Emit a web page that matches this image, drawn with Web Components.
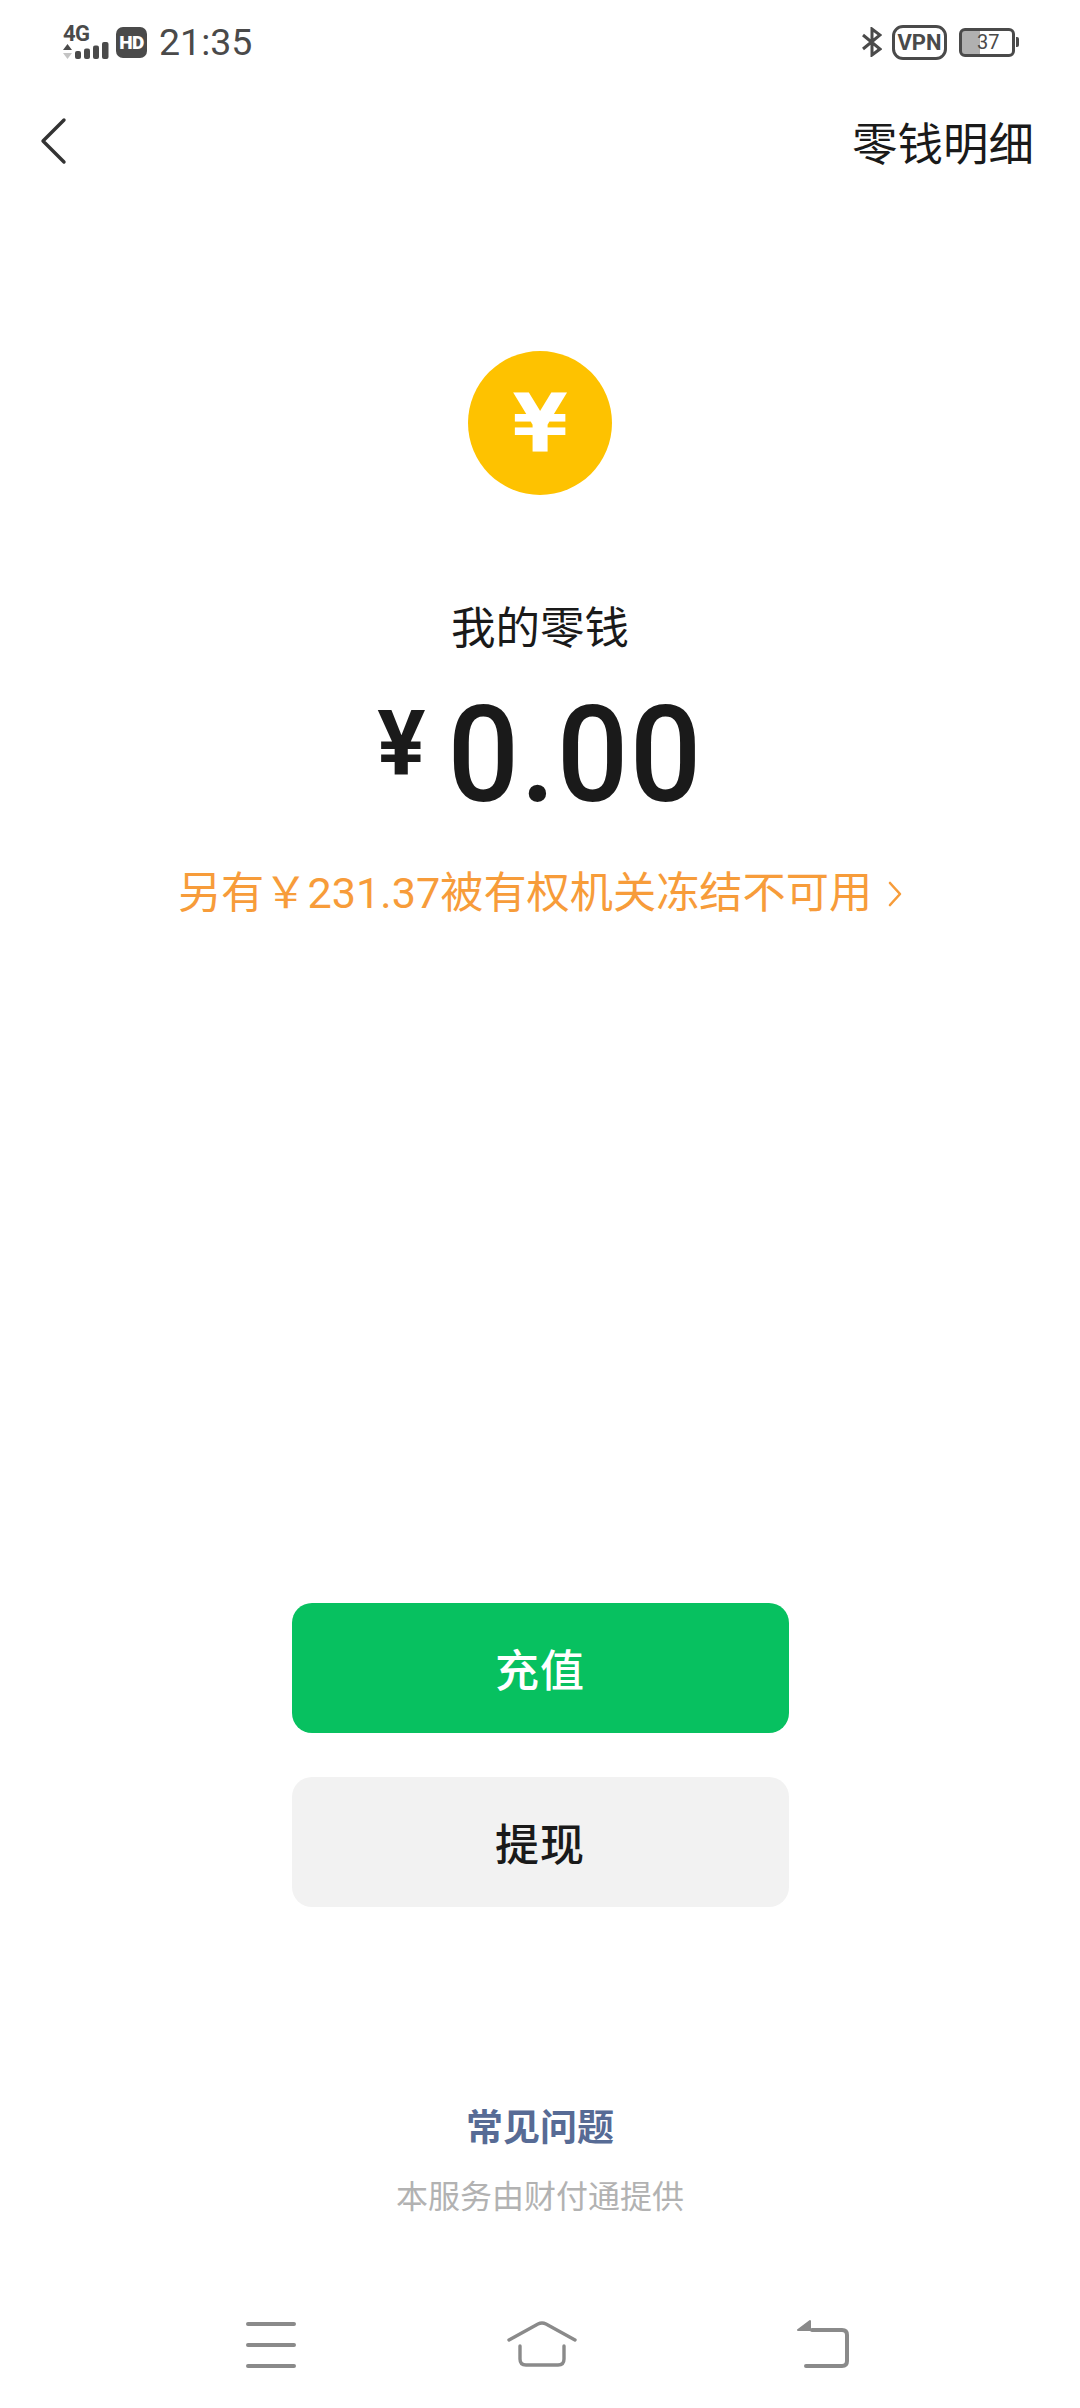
<!DOCTYPE html>
<html lang="zh">
<head>
<meta charset="utf-8">
<title>我的零钱</title>
<style>
    html, body {
        margin: 0;
        background: #fff;
    }
    body {
        width: 1080px;
        height: 2408px;
        overflow: hidden;
        display: flex;
        flex-direction: column;
        font-family: Roboto, "Noto Sans CJK SC", sans-serif;
    }
</style>
</head>
<body>
<status-bar></status-bar>
<nav-bar title="零钱明细"></nav-bar>
<balance-card amount="0.00" frozen="另有￥231.37被有权机关冻结不可用"></balance-card>
<action-button kind="primary" style="margin-top: 679px">充值</action-button>
<action-button kind="plain" style="margin-top: 44px">提现</action-button>
<page-footer></page-footer>
<system-nav></system-nav>

<script>
class StatusBar extends HTMLElement {
    constructor() {
        super();
        this.attachShadow({ mode: "open" });
    }

    connectedCallback() {
        this.shadowRoot.innerHTML = `
            <style>
                :host {
                    display: flex;
                    align-items: center;
                    height: 84px;
                    padding: 0 61px 0 63px;
                    color: #4a4a4a;
                    font-family: Roboto, sans-serif;
                }
                .net { display: flex; flex-direction: column; width: 48px; }
                .net b { font-size: 22px; line-height: 17px; letter-spacing: -0.5px; }
                .hd {
                    width: 31px;
                    height: 31px;
                    margin-left: 5px;
                    border-radius: 7px;
                    background: #4a4a4a;
                    color: #fff;
                    font-size: 19px;
                    font-weight: 900;
                    line-height: 31px;
                    text-align: center;
                    letter-spacing: -0.5px;
                }
                .time { margin-left: 12px; font-size: 37.5px; line-height: 40px; }
                .right { margin-left: auto; display: flex; align-items: center; }
                .vpn {
                    box-sizing: border-box;
                    width: 55px;
                    height: 35px;
                    margin-left: 10px;
                    border: 3px solid #4a4a4a;
                    border-radius: 11px;
                    font-size: 22px;
                    font-weight: 700;
                    line-height: 29px;
                    text-align: center;
                }
                .battery {
                    box-sizing: border-box;
                    width: 56px;
                    height: 29px;
                    margin-left: 12px;
                    border: 3px solid #4a4a4a;
                    border-radius: 6px;
                    background: linear-gradient(90deg, #b0b0b0 18px, #fff 18px);
                    font-size: 20px;
                    line-height: 23px;
                    padding-left: 15px;
                }
                .tip { width: 3px; height: 10px; margin-left: 1px; background: #4a4a4a; border-radius: 0 2px 2px 0; }
            </style>
            <div class="net">
                <b>4G</b>
                <svg width="48" height="18" viewBox="0 0 48 18">
                    <path d="M0 8 L4.5 2 L9 8Z" fill="#4a4a4a"/>
                    <path d="M0 11 L9 11 L4.5 17Z" fill="#c4c4c4"/>
                    <g fill="#4a4a4a">
                        <rect x="12" y="9" width="6" height="8" rx="2"/>
                        <rect x="21" y="6.500" width="6" height="10.500" rx="2"/>
                        <rect x="30" y="3.500" width="6" height="13.500" rx="2"/>
                        <rect x="39" y="0" width="6.500" height="17" rx="2"/>
                    </g>
                </svg>
            </div>
            <div class="hd">HD</div>
            <div class="time">21:35</div>
            <div class="right">
                <svg width="20" height="30" viewBox="0 0 20 30" fill="none" stroke="#4a4a4a" stroke-width="3">
                    <path d="M1 8 L18 22 L10 28 V2 L18 8 L1 22"/>
                </svg>
                <div class="vpn">VPN</div>
                <div class="battery">37</div>
                <div class="tip"></div>
            </div>
        `;
    }
}

class NavBar extends HTMLElement {
    constructor() {
        super();
        this.attachShadow({ mode: "open" });
    }

    connectedCallback() {
        this.shadowRoot.innerHTML = `
            <style>
                :host {
                    display: flex;
                    align-items: center;
                    justify-content: space-between;
                    height: 114px;
                    padding: 0 46px 0 40px;
                    color: #1a1a1a;
                    font-family: "Noto Sans CJK SC", sans-serif;
                    font-size: 45.500px;
                }
            </style>
            <svg width="27" height="48" viewBox="0 0 27 48" fill="none" stroke="#333" stroke-width="3.4" stroke-linecap="round" stroke-linejoin="round">
                <path d="M24 3 L3 24 L24 45"/>
            </svg>
            <span>${this.getAttribute("title")}</span>
        `;
    }
}

class BalanceCard extends HTMLElement {
    constructor() {
        super();
        this.attachShadow({ mode: "open" });
    }

    connectedCallback() {
        this.shadowRoot.innerHTML = `
            <style>
                :host {
                    display: flex;
                    flex-direction: column;
                    align-items: center;
                    padding-top: 153px;
                    font-family: Roboto, "Noto Sans CJK SC", sans-serif;
                }
                .coin {
                    width: 144px;
                    height: 144px;
                    border-radius: 50%;
                    background: #fec200;
                    color: #fff;
                    font-family: "DejaVu Sans", sans-serif;
                    font-size: 80px;
                    font-weight: 700;
                    line-height: 146px;
                    text-align: center;
                }
                .label {
                    margin-top: 97px;
                    color: #1a1a1a;
                    font-family: "Noto Sans CJK SC", sans-serif;
                    font-size: 44.500px;
                    line-height: 66px;
                }
                .amount {
                    display: flex;
                    align-items: flex-start;
                    height: 130px;
                    margin-top: 33px;
                    color: #1a1a1a;
                }
                .yen { font-size: 90px; font-weight: 700; line-height: 108px; margin-right: 22px; }
                .value {
                    font-size: 126px;
                    font-weight: 500;
                    line-height: 130px;
                    letter-spacing: 1.300px;
                    transform: scaleY(1.055);
                }
                .frozen {
                    display: flex;
                    align-items: center;
                    gap: 16px;
                    margin-top: 43px;
                    color: #f79c3a;
                    font-size: 43.200px;
                    line-height: 60px;
                }
            </style>
            <div class="coin">¥</div>
            <div class="label">我的零钱</div>
            <div class="amount">
                <span class="yen">¥</span>
                <span class="value">${this.getAttribute("amount")}</span>
            </div>
            <div class="frozen">
                <span>${this.getAttribute("frozen")}</span>
                <svg width="14" height="28" viewBox="0 0 14 28" fill="none" stroke="#f79c3a" stroke-width="2.6" stroke-linecap="round" stroke-linejoin="round">
                    <path d="M2 3 L12 14 L2 25"/>
                </svg>
            </div>
        `;
    }
}

class ActionButton extends HTMLElement {
    constructor() {
        super();
        this.attachShadow({ mode: "open" });
    }

    connectedCallback() {
        this.shadowRoot.innerHTML = `
            <style>
                :host {
                    display: flex;
                    align-items: center;
                    justify-content: center;
                    align-self: center;
                    width: 497px;
                    height: 130px;
                    border-radius: 20px;
                    font-family: "Noto Sans CJK SC", sans-serif;
                    font-size: 44px;
                    font-weight: 500;
                    letter-spacing: 1px;
                }
                :host([kind="primary"]) { background: #07c160; color: #fff; }
                :host([kind="plain"]) { background: #f2f2f2; color: #1a1a1a; }
            </style>
            <slot></slot>
        `;
    }
}

class PageFooter extends HTMLElement {
    constructor() {
        super();
        this.attachShadow({ mode: "open" });
    }

    connectedCallback() {
        this.shadowRoot.innerHTML = `
            <style>
                :host {
                    display: flex;
                    flex-direction: column;
                    align-items: center;
                    padding-top: 191px;
                    font-family: "Noto Sans CJK SC", sans-serif;
                }
                .faq { color: #576b95; font-size: 37px; font-weight: 700; line-height: 54px; }
                .by { margin-top: 18px; color: #b2b2b2; font-size: 32px; line-height: 48px; }
            </style>
            <div class="faq">常见问题</div>
            <div class="by">本服务由财付通提供</div>
        `;
    }
}

class SystemNav extends HTMLElement {
    constructor() {
        super();
        this.attachShadow({ mode: "open" });
    }

    connectedCallback() {
        this.shadowRoot.innerHTML = `
            <style>
                :host {
                    display: flex;
                    align-items: center;
                    justify-content: space-between;
                    margin-top: auto;
                    height: 78px;
                    padding: 0 230px 25px 246px;
                }
                svg { display: block; }
                .home { margin-right: 8px; }
            </style>
            <svg width="50" height="50" viewBox="0 0 50 50" fill="none" stroke="#8a8a8a" stroke-width="4" stroke-linecap="round">
                <path d="M2 5 H48 M2 26 H48 M2 47 H48"/>
            </svg>
            <svg class="home" width="70" height="46" viewBox="0 0 70 46" fill="none" stroke="#8a8a8a" stroke-width="3.4" stroke-linecap="round" stroke-linejoin="round">
                <path d="M2 19 L31 3 Q35 1 39 3 L68 19"/>
                <path d="M13 25 V38 Q13 44 19 44 H51 Q57 44 57 38 V25"/>
            </svg>
            <svg width="54" height="50" viewBox="0 0 54 50" fill="none" stroke="#8a8a8a" stroke-width="4" stroke-linecap="round" stroke-linejoin="round">
                <path d="M16 11 H46 Q51 11 51 16 V42 Q51 47 46 47 H10"/>
                <path d="M14 2 V11 H2 Z" fill="#8a8a8a" stroke-width="2"/>
            </svg>
        `;
    }
}

customElements.define("status-bar", StatusBar);
customElements.define("nav-bar", NavBar);
customElements.define("balance-card", BalanceCard);
customElements.define("action-button", ActionButton);
customElements.define("page-footer", PageFooter);
customElements.define("system-nav", SystemNav);
</script>
</body>
</html>
